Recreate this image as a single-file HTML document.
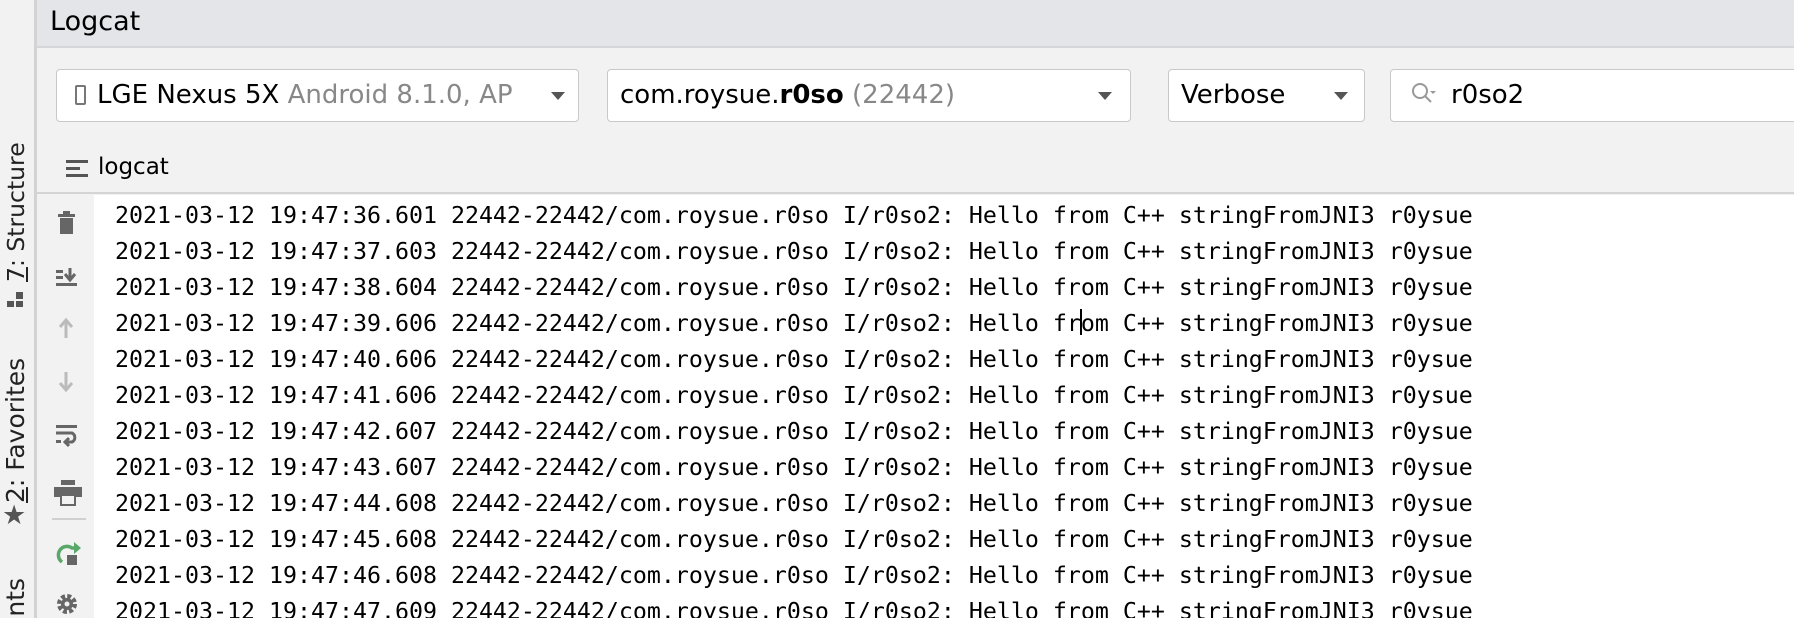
<!DOCTYPE html>
<html><head><meta charset="utf-8"><style>
*{margin:0;padding:0;box-sizing:border-box}
html,body{width:1794px;height:618px;overflow:hidden}
body{background:#f2f2f2;position:relative;font-family:"DejaVu Sans","Liberation Sans",sans-serif;color:#000}
.abs{position:absolute}
#head{left:37px;top:0;width:1757px;height:48px;background:#e3e5e9;border-bottom:2px solid #d4d6da}
#head span{position:absolute;left:13px;top:6px;font-size:27px}
#strip{left:0;top:0;width:37px;height:618px;background:#f2f2f2;border-right:3px solid #d3d3d3}
.box{background:#fff;border:1.5px solid #c9c9c9;border-radius:4px;height:53px;top:69px;font-size:26px;line-height:50px;white-space:nowrap;overflow:hidden}
.arr{position:absolute;top:22px;width:0;height:0;border-left:7px solid transparent;border-right:7px solid transparent;border-top:8px solid #555}
.vt{position:absolute;transform:rotate(-90deg);transform-origin:left top;font-size:25px;line-height:26px;white-space:nowrap;color:#222}
#log{left:94px;top:195px;width:1700px;height:423px;background:#fff}
#gut{left:37px;top:195px;width:57px;height:423px;background:#f2f2f2}
pre{position:absolute;left:115px;top:198px;font-family:"DejaVu Sans Mono","Liberation Mono",monospace;font-size:23.25px;line-height:36px;color:#000}
</style></head><body>
<div class="abs" id="strip"></div>
<div class="vt" style="left:3px;top:282px;font-size:23.5px"><u>7</u>: Structure</div>
<div class="abs" style="left:7px;top:301px;width:7px;height:6px;background:#555"></div>
<div class="abs" style="left:16px;top:301px;width:7px;height:6px;background:#555"></div>
<div class="abs" style="left:16px;top:292px;width:7px;height:7px;background:#555"></div>
<div class="vt" style="left:3px;top:503px"><u>2</u>: Favorites</div>
<div class="abs" style="left:2px;top:500px;font-size:27px;color:#555">★</div>
<div class="vt" style="left:3px;top:632px">ants</div>

<div class="abs" id="head"><span>Logcat</span></div>

<div class="abs box" style="left:56px;width:523px">
 <span style="display:inline-block;width:11px;height:20px;border:2px solid #777;border-radius:2px;margin:0 11px 0 18px;vertical-align:-2px"></span><span>LGE Nexus 5X</span> <span style="color:#888">Android 8.1.0, AP</span>
 <div class="arr" style="left:494px"></div></div>
<div class="abs box" style="left:607px;width:524px;padding-left:12px">com.roysue.<b>r0so</b> <span style="color:#888">(22442)</span><div class="arr" style="left:490px"></div></div>
<div class="abs box" style="left:1168px;width:197px;padding-left:12px">Verbose<div class="arr" style="left:165px"></div></div>
<div class="abs box" style="left:1390px;width:420px;padding-left:20px">
 <svg width="26" height="24" style="vertical-align:-3px;margin-right:14px"><circle cx="9" cy="9" r="7" fill="none" stroke="#999" stroke-width="2"/><path d="M14 14l6 6" stroke="#999" stroke-width="2"/><path d="M19 9l6 0l-3 3z" fill="#999"/></svg>r0so2</div>

<svg class="abs" style="left:66px;top:160px" width="24" height="20"><rect x="0" y="0" width="22" height="3" fill="#555"/><rect x="0" y="7" width="14" height="3" fill="#555"/><rect x="0" y="14" width="22" height="3" fill="#555"/></svg>
<div class="abs" style="left:98px;top:154px;font-size:23px">logcat</div>
<div class="abs" style="left:37px;top:192px;width:1757px;height:2px;background:#d4d4d4"></div>

<div class="abs" id="gut"></div>
<div class="abs" id="log"></div>
<svg class="abs" style="left:52px;top:210px" width="34" height="410">
 <g fill="#666"><rect x="6" y="4" width="17" height="3"/><rect x="11" y="1" width="7" height="4"/><rect x="8" y="8" width="13" height="16"/></g>
 <g fill="#666"><rect x="4" y="60" width="7" height="3"/><rect x="4" y="66" width="7" height="3"/><rect x="4" y="73" width="21" height="3"/><path d="M18 58v10M13 64l5 6 5-6" stroke="#666" stroke-width="3" fill="none"/></g>
 <path d="M14 110v18M8 117l6-7 6 7" stroke="#bbb" stroke-width="3" fill="none"/>
 <path d="M14 162v18M8 173l6 7 6-7" stroke="#bbb" stroke-width="3" fill="none"/>
 <g fill="#666"><rect x="4" y="215" width="21" height="3"/><rect x="4" y="230" width="5" height="3"/><path d="M4 223h16a5 5 0 0 1 0 9h-6M17 228l-4 4 4 4" stroke="#666" stroke-width="3" fill="none"/></g>
 <g fill="#666"><rect x="9" y="270" width="14" height="5"/><rect x="2" y="277" width="28" height="10"/><rect x="9" y="285" width="14" height="10" fill="#f2f2f2" stroke="#666" stroke-width="2"/></g>
 <rect x="-2" y="308" width="37" height="2" fill="#d0d0d0"/>
 <path d="M10 352a8 8 0 0 1 10-14h4" stroke="#59a869" stroke-width="3.5" fill="none"/><path d="M22 332l7 6-7 6z" fill="#59a869"/><rect x="15" y="345" width="10" height="10" fill="#666"/>
 <g transform="translate(15,394)"><circle r="7" fill="none" stroke="#666" stroke-width="6" stroke-dasharray="3.5 2"/><circle r="6" fill="#666"/><circle r="2.5" fill="#f2f2f2"/></g>
</svg>
<pre>2021-03-12 19:47:36.601 22442-22442/com.roysue.r0so I/r0so2: Hello from C++ stringFromJNI3 r0ysue
2021-03-12 19:47:37.603 22442-22442/com.roysue.r0so I/r0so2: Hello from C++ stringFromJNI3 r0ysue
2021-03-12 19:47:38.604 22442-22442/com.roysue.r0so I/r0so2: Hello from C++ stringFromJNI3 r0ysue
2021-03-12 19:47:39.606 22442-22442/com.roysue.r0so I/r0so2: Hello from C++ stringFromJNI3 r0ysue
2021-03-12 19:47:40.606 22442-22442/com.roysue.r0so I/r0so2: Hello from C++ stringFromJNI3 r0ysue
2021-03-12 19:47:41.606 22442-22442/com.roysue.r0so I/r0so2: Hello from C++ stringFromJNI3 r0ysue
2021-03-12 19:47:42.607 22442-22442/com.roysue.r0so I/r0so2: Hello from C++ stringFromJNI3 r0ysue
2021-03-12 19:47:43.607 22442-22442/com.roysue.r0so I/r0so2: Hello from C++ stringFromJNI3 r0ysue
2021-03-12 19:47:44.608 22442-22442/com.roysue.r0so I/r0so2: Hello from C++ stringFromJNI3 r0ysue
2021-03-12 19:47:45.608 22442-22442/com.roysue.r0so I/r0so2: Hello from C++ stringFromJNI3 r0ysue
2021-03-12 19:47:46.608 22442-22442/com.roysue.r0so I/r0so2: Hello from C++ stringFromJNI3 r0ysue
2021-03-12 19:47:47.609 22442-22442/com.roysue.r0so I/r0so2: Hello from C++ stringFromJNI3 r0ysue</pre>
<div class="abs" style="left:1080px;top:309px;width:2px;height:26px;background:#000"></div>
</body></html>
